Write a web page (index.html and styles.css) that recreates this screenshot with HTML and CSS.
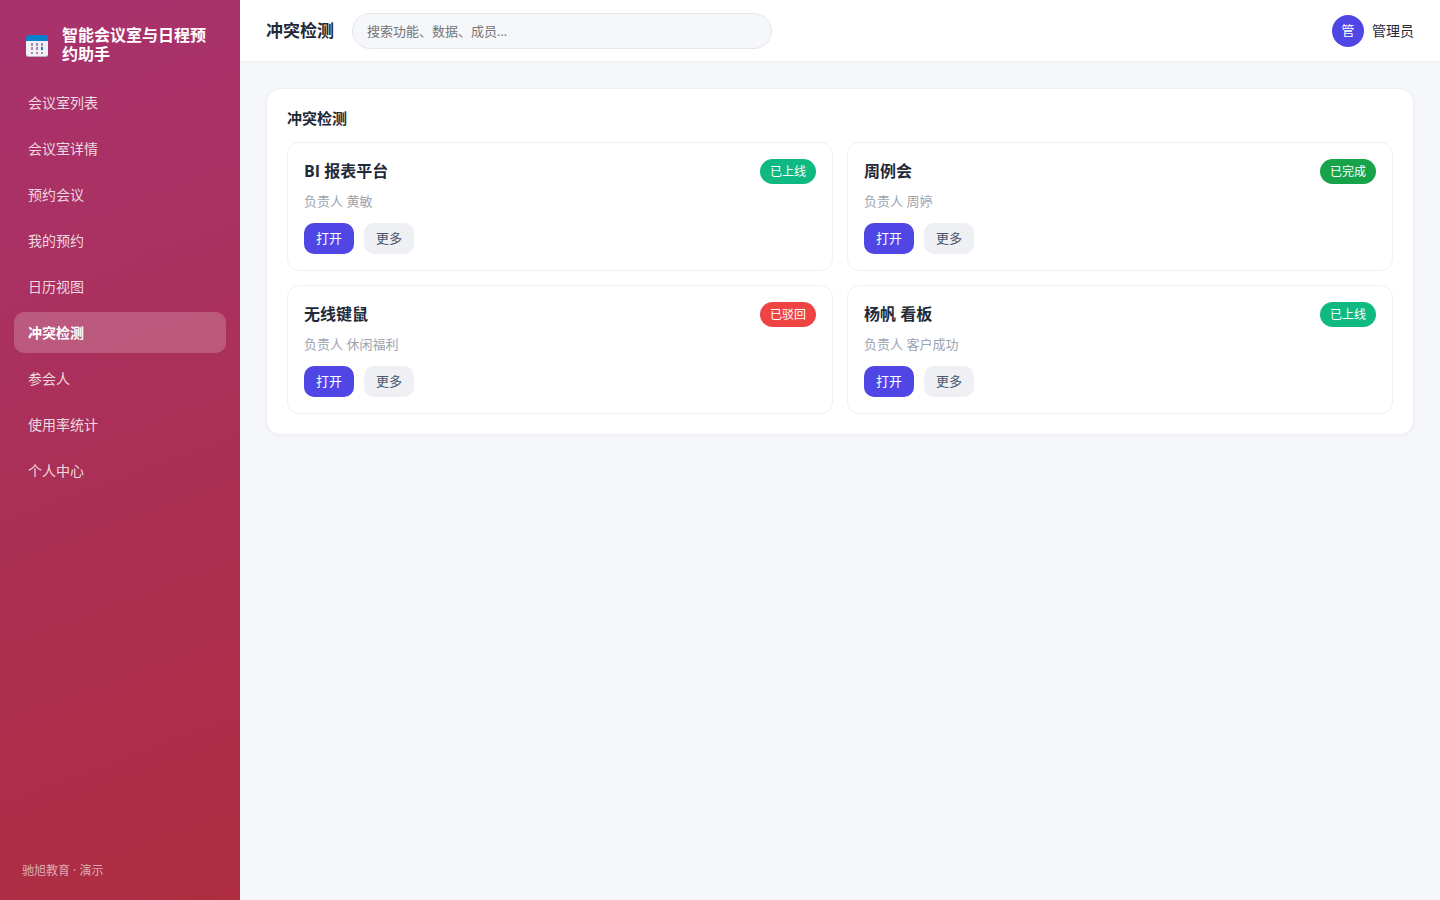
FILE: index.html
```
<!DOCTYPE html>
<html lang="zh-CN">
<head>
    <meta charset="utf-8">
    <meta name="viewport" content="width=device-width, initial-scale=1.0">
    <title>冲突检测 - 智能会议室与日程预约助手</title>
    <link rel="stylesheet" href="styles.css">
</head>
<body>
    <aside class="sidebar">
        <div class="brand">
            <svg class="brand-icon" viewBox="0 -1 26 26" aria-hidden="true">
                <path fill="#b9b2c4" d="M2 8h22v13.500a2.500 2.500 0 0 1-2.500 2.500h-17A2.500 2.500 0 0 1 2 21.500z"/>
                <path fill="#f3eff8" d="M2 7h22v13.500a2.500 2.500 0 0 1-2.500 2.500h-17A2.500 2.500 0 0 1 2 20.500z"/>
                <path fill="#0a80cb" d="M5.500 2h15A3.500 3.500 0 0 1 24 5.500V8H2V5.500A3.500 3.500 0 0 1 5.500 2z"/>
                <path fill="#9a93a8" d="M7 10h2v3H7zM12 10h2v3h-2zM17 10h2v3h-2zM7 14h2v3H7zM12 14h2v3h-2zM7 19h2v2H7zM12 19h2v2h-2zM17 19h2v2h-2z"/>
                <path fill="#0a80cb" d="M17 14h2v3h-2z"/>
            </svg>
            <span>智能会议室与日程预约助手</span>
        </div>
        <nav class="nav">
            <a class="nav-item" href="#">会议室列表</a>
            <a class="nav-item" href="#">会议室详情</a>
            <a class="nav-item" href="#">预约会议</a>
            <a class="nav-item" href="#">我的预约</a>
            <a class="nav-item" href="#">日历视图</a>
            <a class="nav-item active" href="#" aria-current="page">冲突检测</a>
            <a class="nav-item" href="#">参会人</a>
            <a class="nav-item" href="#">使用率统计</a>
            <a class="nav-item" href="#">个人中心</a>
        </nav>
        <div class="sidebar-footer">驰旭教育 · 演示</div>
    </aside>

    <div class="main">
        <header class="topbar">
            <h1>冲突检测</h1>
            <input class="search" type="search" placeholder="搜索功能、数据、成员…" aria-label="搜索">
            <div class="user">
                <span class="avatar">管</span>
                <span>管理员</span>
            </div>
        </header>

        <main class="content">
            <section class="panel">
                <h2>冲突检测</h2>
                <div class="grid">
                    <article class="card">
                        <div class="card-head">
                            <h3>BI 报表平台</h3>
                            <span class="badge badge-online">已上线</span>
                        </div>
                        <p class="owner">负责人 黄敏</p>
                        <div class="actions">
                            <button class="btn btn-primary" type="button">打开</button>
                            <button class="btn" type="button">更多</button>
                        </div>
                    </article>
                    <article class="card">
                        <div class="card-head">
                            <h3>周例会</h3>
                            <span class="badge badge-done">已完成</span>
                        </div>
                        <p class="owner">负责人 周婷</p>
                        <div class="actions">
                            <button class="btn btn-primary" type="button">打开</button>
                            <button class="btn" type="button">更多</button>
                        </div>
                    </article>
                    <article class="card">
                        <div class="card-head">
                            <h3>无线键鼠</h3>
                            <span class="badge badge-rejected">已驳回</span>
                        </div>
                        <p class="owner">负责人 休闲福利</p>
                        <div class="actions">
                            <button class="btn btn-primary" type="button">打开</button>
                            <button class="btn" type="button">更多</button>
                        </div>
                    </article>
                    <article class="card">
                        <div class="card-head">
                            <h3>杨帆 看板</h3>
                            <span class="badge badge-online">已上线</span>
                        </div>
                        <p class="owner">负责人 客户成功</p>
                        <div class="actions">
                            <button class="btn btn-primary" type="button">打开</button>
                            <button class="btn" type="button">更多</button>
                        </div>
                    </article>
                </div>
            </section>
        </main>
    </div>
</body>
</html>
```
FILE: styles.css
```
:root {
    --primary: #4f46e5;
    --bg: #f5f7fb;
    --text: #1f2937;
    --muted: #9ca3af;
    --line: #eef0f4;
}

* {
    box-sizing: border-box;
}

body {
    display: flex;
    min-height: 100vh;
    margin: 0;
    font-family: "Open Sans", "Noto Sans CJK SC", sans-serif;
    font-size: 14px;
    line-height: 19px;
    color: var(--text);
    background: var(--bg);
}

h1, h2, h3, p {
    margin: 0;
}

/* Sidebar */
.sidebar {
    display: flex;
    flex-direction: column;
    flex: 0 0 240px;
    padding: 26px 14px 20px;
    color: #fff;
    background: linear-gradient(160deg, #a8326e, #ae2d40);
}

.brand {
    display: flex;
    align-items: center;
    gap: 12px;
    padding: 0 10px;
    margin-bottom: 18px;
    font-size: 16px;
    font-weight: 700;
}

.brand-icon {
    flex: none;
    width: 26px;
    height: 26px;
}

.nav {
    display: flex;
    flex-direction: column;
    gap: 5px;
}

.nav-item {
    padding: 11px 14px;
    border-radius: 10px;
    color: rgba(255, 255, 255, 0.82);
    text-decoration: none;
}

.nav-item.active {
    font-weight: 700;
    color: #fff;
    background: rgba(255, 255, 255, 0.2);
}

.sidebar-footer {
    margin-top: auto;
    padding: 0 8px;
    font-size: 12px;
    color: rgba(255, 255, 255, 0.6);
}

/* Top bar */
.main {
    flex: 1;
    min-width: 0;
}

.topbar {
    display: flex;
    align-items: center;
    gap: 18px;
    height: 62px;
    padding: 0 26px;
    background: #fff;
    border-bottom: 1px solid var(--line);
}

.topbar h1 {
    font-size: 17px;
}

.search {
    width: 420px;
    height: 36px;
    padding: 0 14px;
    border: 1px solid #e5e7eb;
    border-radius: 18px;
    font: inherit;
    font-size: 13px;
    background: var(--bg);
    appearance: none;
}

.user {
    display: flex;
    align-items: center;
    gap: 8px;
    margin-left: auto;
}

.avatar {
    display: flex;
    align-items: center;
    justify-content: center;
    width: 32px;
    height: 32px;
    border-radius: 50%;
    font-size: 13px;
    color: #fff;
    background: var(--primary);
}

/* Content */
.content {
    padding: 26px;
}

.panel {
    padding: 20px;
    border: 1px solid var(--line);
    border-radius: 14px;
    background: #fff;
    box-shadow: 0 1px 3px rgba(16, 24, 40, 0.04);
}

.panel h2 {
    margin-bottom: 14px;
    font-size: 15px;
}

.grid {
    display: grid;
    grid-template-columns: repeat(2, 1fr);
    gap: 14px;
}

.card {
    padding: 16px;
    border: 1px solid var(--line);
    border-radius: 12px;
}

.card-head {
    display: flex;
    align-items: center;
    justify-content: space-between;
}

.card h3 {
    font-size: 16px;
}

.badge {
    padding: 3px 10px;
    border-radius: 999px;
    font-size: 12px;
    color: #fff;
}

.badge-online {
    background: #10b981;
}

.badge-done {
    background: #16a34a;
}

.badge-rejected {
    background: #ef4444;
}

.owner {
    margin: 8px 0 12px;
    font-size: 13px;
    color: var(--muted);
}

.actions {
    display: flex;
    gap: 10px;
}

.btn {
    padding: 6px 12px;
    border: 0;
    border-radius: 10px;
    font: inherit;
    font-size: 13px;
    color: #475569;
    background: #eef0f4;
    cursor: pointer;
}

.btn-primary {
    color: #fff;
    background: var(--primary);
}
```
